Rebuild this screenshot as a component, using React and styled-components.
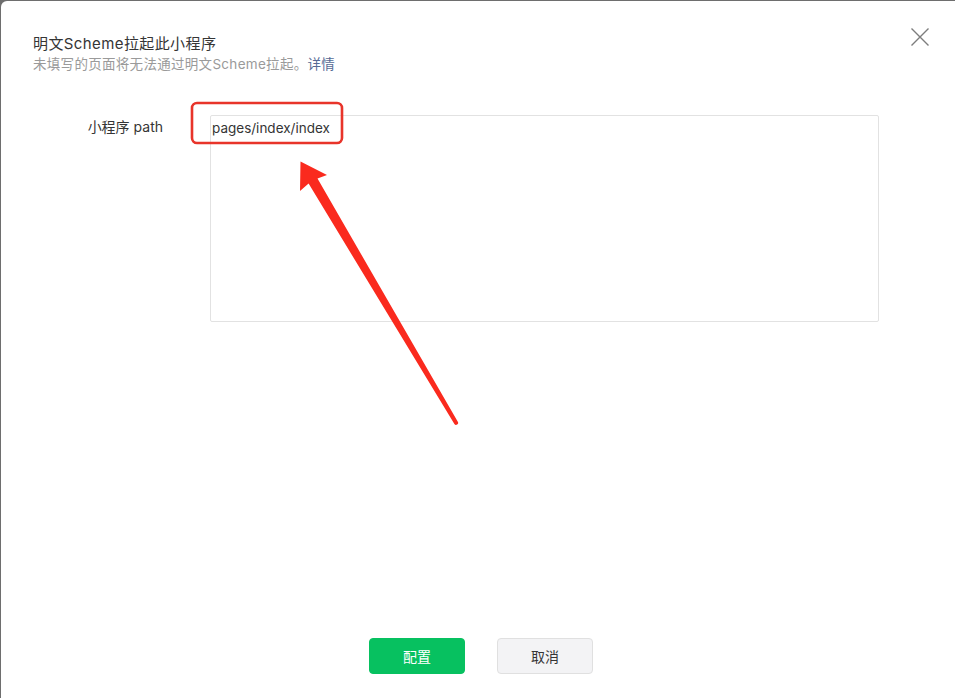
import styled, { createGlobalStyle } from "styled-components";

const GlobalStyle = createGlobalStyle`
  html, body {
    margin: 0;
    padding: 0;
    background: #6e6e6e;
  }
  * {
    box-sizing: border-box;
  }
`;

const FONT = `"Inter", "Noto Sans CJK SC", "Noto Sans", sans-serif`;

const Page = styled.div`
  width: 955px;
  height: 698px;
  padding: 1px 0 0 1px;
  position: relative;
  overflow: hidden;
`;

const Dialog = styled.div`
  height: 100%;
  background: #fff;
  border-top-left-radius: 6px;
  display: flex;
  flex-direction: column;
  font-family: ${FONT};
  color: #353535;
  position: relative;
`;

const Header = styled.div`
  padding: 33px 32px 0 32px;
`;

const Title = styled.div`
  font-size: 15px;
  letter-spacing: 0.4px;
  line-height: 20px;
  color: #353535;
`;

const Subtitle = styled.div`
  font-size: 13.5px;
  letter-spacing: 0.3px;
  line-height: 20px;
  color: #9a9a9a;
`;

const Link = styled.a`
  color: #576b95;
  text-decoration: none;
  cursor: pointer;
`;

const Close = styled.button`
  position: absolute;
  top: 26px;
  right: 25px;
  width: 20px;
  height: 20px;
  padding: 0;
  border: 0;
  background: none;
  cursor: pointer;
`;

const FormRow = styled.div`
  display: grid;
  grid-template-columns: 130px 1fr;
  column-gap: 47px;
  padding: 41px 76px 0 32px;
`;

const Label = styled.label`
  text-align: right;
  font-size: 14px;
  line-height: 22px;
  padding-top: 1px;
  color: #353535;
`;

const Area = styled.textarea`
  display: block;
  width: 100%;
  height: 207px;
  border: 1px solid #e2e2e2;
  border-radius: 2px;
  padding: 1px 1px;
  font-family: ${FONT};
  font-size: 13.5px;
  line-height: 22px;
  color: #353535;
  resize: none;
  outline: none;
  background: #fff;
`;

const Footer = styled.div`
  margin-top: auto;
  display: flex;
  justify-content: center;
  gap: 32px;
  padding: 0 0 24px 6px;
`;

const Button = styled.button`
  width: 96px;
  height: 36px;
  border-radius: 4px;
  font-family: ${FONT};
  font-size: 14px;
  cursor: pointer;
  border: 1px solid ${(p) => (p.primary ? "#07c160" : "#e0e0e0")};
  background: ${(p) => (p.primary ? "#07c160" : "#f3f3f5")};
  color: ${(p) => (p.primary ? "#fff" : "#353535")};
`;

const Annotation = styled.svg`
  position: absolute;
  left: 0;
  top: 0;
  pointer-events: none;
`;

export default function App() {
  return (
    <>
      <GlobalStyle />
      <Page>
        <Dialog>
          <Header>
            <Title>明文Scheme拉起此小程序</Title>
            <Subtitle>
              未填写的页面将无法通过明文Scheme拉起。<Link>详情</Link>
            </Subtitle>
          </Header>
          <Close aria-label="关闭">
            <svg width="20" height="20" viewBox="0 0 20 20">
              <path
                d="M1.5 1.5 L18.5 18.5 M18.5 1.5 L1.5 18.5"
                stroke="#7d7d7d"
                strokeWidth="1.4"
                fill="none"
              />
            </svg>
          </Close>
          <FormRow>
            <Label>小程序 path</Label>
            <Area readOnly value="pages/index/index" />
          </FormRow>
          <Footer>
            <Button primary>配置</Button>
            <Button>取消</Button>
          </Footer>
        </Dialog>
        <Annotation width="955" height="698" viewBox="0 0 955 698">
          <rect
            x="192"
            y="103"
            width="150"
            height="40"
            rx="5"
            fill="none"
            stroke="#e8342a"
            strokeWidth="2.6"
          />
          <path
            d="M300.5 161.5 L327 175 L317.5 178.6 L457.8 421.8 A2 2 0 0 1 454.4 424 L308.6 183.6 L300 191 Z"
            fill="#fa2a1e"
          />
        </Annotation>
      </Page>
    </>
  );
}
